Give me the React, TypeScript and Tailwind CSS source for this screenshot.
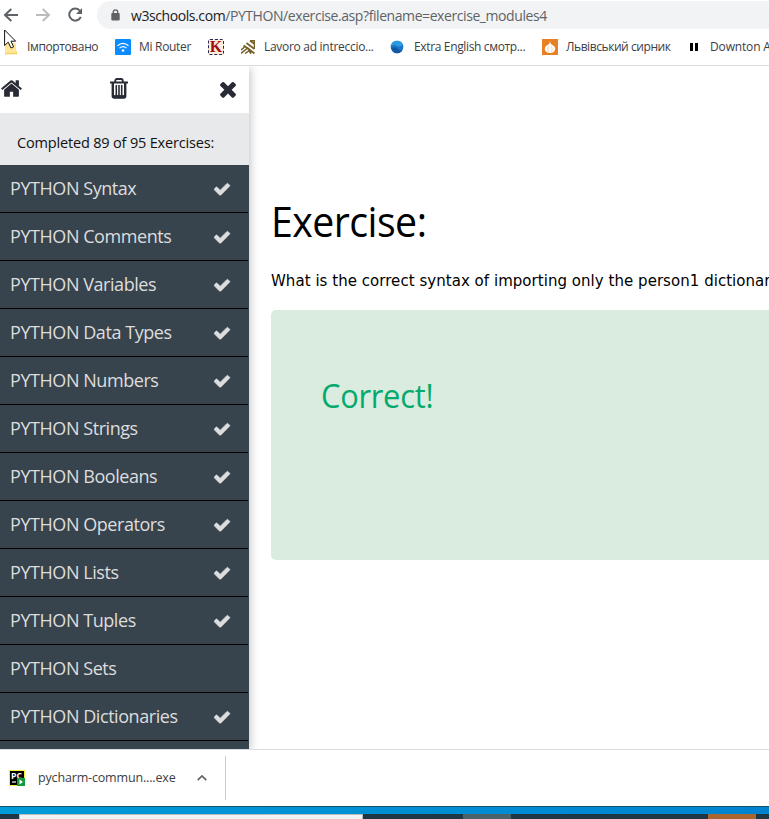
import type { ReactNode } from 'react';

const exercises: { name: string; done: boolean }[] = [
  { name: 'PYTHON Syntax', done: true },
  { name: 'PYTHON Comments', done: true },
  { name: 'PYTHON Variables', done: true },
  { name: 'PYTHON Data Types', done: true },
  { name: 'PYTHON Numbers', done: true },
  { name: 'PYTHON Strings', done: true },
  { name: 'PYTHON Booleans', done: true },
  { name: 'PYTHON Operators', done: true },
  { name: 'PYTHON Lists', done: true },
  { name: 'PYTHON Tuples', done: true },
  { name: 'PYTHON Sets', done: false },
  { name: 'PYTHON Dictionaries', done: true },
];

function CheckIcon() {
  return (
    <svg viewBox="0 0 1792 1792" className="h-[18px] w-[18px] fill-[#dddddd] stroke-[#dddddd]" strokeWidth="60">
      <path d="M1671 566q0 40-28 68l-724 724-136 136q-28 28-68 28t-68-28l-136-136-362-362q-28-28-28-68t28-68l136-136q28-28 68-28t68 28l294 295 656-657q28-28 68-28t68 28l136 136q28 28 28 68z" />
    </svg>
  );
}

function CloseIcon() {
  return (
    <svg viewBox="0 0 1792 1792" className="h-6 w-6 fill-[#282a35]">
      <path d="M1490 1322q0 40-28 68l-136 136q-28 28-68 28t-68-28l-294-294-294 294q-28 28-68 28t-68-28l-136-136q-28-28-28-68t28-68l294-294-294-294q-28-28-28-68t28-68l136-136q28-28 68-28t68 28l294 294 294-294q28-28 68-28t68 28l136 136q28 28 28 68t-28 68l-294 294 294 294q28 28 28 68z" />
    </svg>
  );
}

function HomeIcon() {
  return (
    <svg viewBox="0 0 1792 1792" className="h-[23px] w-[23px] fill-[#282a35]">
      <path d="M1472 992v480q0 26-19 45t-45 19h-384v-384h-256v384h-384q-26 0-45-19t-19-45v-480q0-1 .5-3t.5-3l575-474 575 474q1 2 1 6zm223-69l-62 74q-8 9-21 11h-3q-13 0-21-7l-692-577-692 577q-12 8-24 7-13-2-21-11l-62-74q-8-10-7-23.5t11-21.5l719-599q32-26 76-26t76 26l244 204v-195q0-14 9-23t23-9h192q14 0 23 9t9 23v408l219 182q10 8 11 21.5t-7 23.5z" />
    </svg>
  );
}

function TrashIcon() {
  return (
    <svg viewBox="0 0 18 21" className="mr-0.5 h-[21px] w-[18px]" fill="none" stroke="#282a35">
      <path d="M5.2 4V3Q5.2 1 7 1H11Q12.8 1 12.8 3V4" strokeWidth="1.8" />
      <path d="M0 4.5H18" strokeWidth="2" />
      <path d="M2.8 5V18Q2.8 19.6 4.4 19.6H13.6Q15.2 19.6 15.2 18V5" strokeWidth="2.4" />
      <path d="M3 18.6H15" strokeWidth="3" />
      <path d="M6.3 7V18M9 7V18M11.7 7V18" strokeWidth="1.6" />
    </svg>
  );
}

function Bookmark({ icon, label, className }: { icon: ReactNode; label?: string; className: string }) {
  return (
    <div className={`flex shrink-0 items-center overflow-visible whitespace-nowrap ${className}`}>
      {icon}
      {label && <span>{label}</span>}
    </div>
  );
}

function Toolbar() {
  return (
    <div className="flex h-[30px] items-start">
      <svg viewBox="0 0 97 30" className="h-[30px] w-[97px] shrink-0" fill="none">
        <path d="M18 15H5.5M11.3 9L5 15L11.3 21" stroke="#5f6368" strokeWidth="2" />
        <path d="M36 15H48.5M42.7 9L49 15L42.7 21" stroke="#babcbe" strokeWidth="2" />
        <path d="M80 11A6 6 0 1 0 80.8 16.8" stroke="#5f6368" strokeWidth="2" />
        <path d="M82 8V14H76Z" fill="#5f6368" />
      </svg>
      <div className="mt-px flex h-7 flex-1 items-center rounded-l-full bg-[#f1f3f4]">
        <svg viewBox="0 0 9 12" className="ml-3.5 h-3 w-[9px]" fill="none">
          <rect x="0.3" y="4" width="8.4" height="7.5" rx="1" fill="#5f6368" />
          <path d="M2.3 4.5V3A2.2 2.2 0 0 1 6.7 3V4.5" stroke="#5f6368" strokeWidth="1.3" />
        </svg>
        <span className="ml-[11px] text-[14px] tracking-[-0.42px] whitespace-nowrap text-[#5f6368]">
          <span className="text-[#202124]">w3schools.com</span>/PYTHON/exercise.asp?filename=exercise_modules4
        </span>
      </div>
    </div>
  );
}

function BookmarksBar() {
  return (
    <div className="flex h-[35px] items-center pb-px text-[12px] text-[#3c4043]">
      <Bookmark
        className="w-[115px] gap-2.5 pl-[5px] tracking-[-0.38px]"
        label="Імпортовано"
        icon={
          <svg viewBox="0 0 12 16" className="h-4 w-3" fill="none">
            <path d="M0 2H6L7 4H11V15H0Z" fill="#ffe594" />
            <path d="M0 14.2H11L12 11V15.2H0Z" fill="#f0c94d" />
          </svg>
        }
      />
      <Bookmark
        className="w-[93px] gap-2 tracking-[-0.3px]"
        label="Mi Router"
        icon={
          <svg viewBox="0 0 16 16" className="h-4 w-4" fill="none">
            <rect width="16" height="16" rx="1" fill="#0a8cff" />
            <path d="M2.5 6.7Q8 2 13.5 6.7M4.5 9.1Q8 6.2 11.5 9.1" stroke="#fff" strokeWidth="1.2" />
            <circle cx="8" cy="11.5" r="1.3" fill="#fff" />
          </svg>
        }
      />
      <Bookmark
        className="w-[33px]"
        icon={
          <div className="flex h-4 w-4 items-center justify-center rounded-[2px] border border-dashed border-[#26285c] bg-[#fcecd7] font-['Liberation_Serif',serif] text-[16px] leading-none font-bold text-[#a00c12]">
            K
          </div>
        }
      />
      <Bookmark
        className="w-[149px] gap-[9px] tracking-[-0.29px]"
        label="Lavoro ad intreccio..."
        icon={
          <svg viewBox="0 0 14 14" className="h-3.5 w-3.5" fill="none" stroke="#75602b">
            <path d="M5.5 3L13.5 9M9 .8L13.7 4M2.5 5.5L7 8.5L10 13.7M7 8.5L13.5 13.5" strokeWidth="1.8" />
            <path d="M9 .8H13.5V9M0 10L3.5 7M0 13.3L6 8.5M4 13.5L8.5 10.5" strokeWidth="1.5" />
          </svg>
        }
      />
      <Bookmark
        className="w-[152px] gap-2.5 tracking-[-0.35px]"
        label="Extra English смотр..."
        icon={
          <svg viewBox="0 0 14 14" className="h-3.5 w-3.5" fill="none">
            <circle cx="7" cy="7" r="6.3" fill="#1975c9" />
            <path d="M1 6Q5 4 7 6T13 5Q12 .7 7 .7T1 6Z" fill="#2b9be0" />
            <path d="M1 8Q5 6 8 9T13 9Q11 13.3 7 13.3T1 8Z" fill="#1557a0" />
          </svg>
        }
      />
      <Bookmark
        className="w-[145px] gap-2 tracking-[-0.43px]"
        label="Львівський сирник"
        icon={
          <svg viewBox="0 0 16 16" className="h-4 w-4">
            <rect width="16" height="16" fill="#e88024" />
            <path d="M8 1.5Q8 5 10.5 6Q14 8 13 11Q12 14 8 14T3 11Q2 8 5.5 6Q8 5 8 1.5Z" fill="#fff" />
            <path d="M6.5 7Q5 10 6.5 13M9.5 7Q11 10 9.5 13" stroke="#f3b77f" strokeWidth=".6" fill="none" />
          </svg>
        }
      />
      <Bookmark
        className="gap-3 pl-[3px] tracking-[-0.15px]"
        label="Downton A"
        icon={
          <div className="flex gap-0.5">
            <div className="h-2 w-[3px] bg-black" />
            <div className="h-2 w-[3px] bg-black" />
          </div>
        }
      />
    </div>
  );
}

function Sidebar() {
  return (
    <aside className="h-[683px] w-[249px] shrink-0 bg-[#38444d] shadow-[0_2px_10px_rgba(0,0,0,0.3)]">
      <div className="flex h-[47px] items-center justify-between bg-white pr-[9px] pb-0.5">
        <HomeIcon />
        <TrashIcon />
        <CloseIcon />
      </div>
      <div className="flex h-[52px] items-center bg-[#e7e9eb] pt-2 pl-[17px] text-[14.5px] tracking-[-0.17px] whitespace-nowrap text-[#111111]">
        Completed 89 of 95 Exercises:
      </div>
      <ul className="mr-px">
        {exercises.map((e) => (
          <li
            key={e.name}
            className="flex h-12 items-center justify-between border-b border-black pr-[17px] pl-2.5 text-[18px] tracking-[-0.44px] text-[#dddddd]"
          >
            <span>{e.name}</span>
            {e.done && <CheckIcon />}
          </li>
        ))}
      </ul>
    </aside>
  );
}

export default function App() {
  return (
    <div className="relative flex h-[819px] w-[769px] flex-col overflow-hidden bg-white font-['Open_Sans','Noto_Sans',sans-serif]">
      <header className="h-[66px] shrink-0 border-b border-[#dadce0]">
        <Toolbar />
        <BookmarksBar />
      </header>
      <svg viewBox="0 0 14 21" className="absolute top-[29px] left-1 h-[21px] w-3.5">
        <path d="M.6 1V16.5L4.2 13.2L7 19L9.6 17.8L7 12.2H11.7Z" fill="#fff" stroke="#111" strokeWidth="1" />
      </svg>
      <main className="flex h-[683px] shrink-0 overflow-hidden">
        <Sidebar />
        <section className="min-w-0 flex-1 overflow-hidden pl-[22px]">
          <h1 className="mt-[123px] h-[63px] origin-left scale-x-[0.936] text-[42px] leading-[63px] tracking-[-0.6px] text-black">
            Exercise:
          </h1>
          <p className="mt-[17px] h-6 font-['DejaVu_Sans',sans-serif] text-[15px] leading-6 tracking-[0.04px] whitespace-nowrap text-black">
            What is the correct syntax of importing only the person1 dictionar
          </p>
          <div className="mt-[17px] h-[250px] w-[600px] rounded-[5px] bg-[#d9ecdf] pt-[62px] pl-[50px]">
            <h2 className="origin-left scale-x-[0.965] text-[32px] leading-[48px] tracking-[-0.3px] text-[#04aa6d]">
              Correct!
            </h2>
          </div>
        </section>
      </main>
      <div className="flex h-[57px] shrink-0 items-center border-t border-[#dadce0]">
        <div className="flex h-[44px] w-[226px] items-center border-r border-[#c9cbce] pl-[9px]">
          <svg viewBox="0 0 16 16" className="h-4 w-4 shrink-0" fill="none">
            <rect x=".5" y=".5" width="15" height="15" fill="#000" stroke="#f5f03b" />
            <text x="2" y="8.7" fontSize="8.5" fontWeight="700" fill="#fff" textLength="11" lengthAdjust="spacingAndGlyphs">
              PC
            </text>
            <path d="M3 12H7" stroke="#fff" strokeWidth="1.2" />
            <rect x="8" y="8" width="8" height="8" fill="#149b39" />
            <path d="M10.5 9.5V14.5L14 12Z" fill="#fff" />
          </svg>
          <span className="ml-[13px] pt-px text-[12.5px] tracking-[-0.16px] whitespace-nowrap text-[#3c4043]">
            pycharm-commun....exe
          </span>
          <svg viewBox="0 0 10 6" className="mr-[18px] ml-auto h-1.5 w-2.5" fill="none">
            <path d="M.7 5.2L5 1L9.3 5.2" stroke="#5f6368" strokeWidth="1.7" />
          </svg>
        </div>
      </div>
      <div className="h-2 shrink-0 border-t border-[#12546e] bg-linear-to-r from-[#009bd8] to-[#0083cf]" />
      <div className="flex h-[5px] shrink-0 bg-[#1f3742]">
        <div className="ml-[19px] h-full w-[344px] border-t border-r border-l border-[#b9bdbf] bg-[#f2f2f2]" />
        <div className="ml-[100px] h-full w-12 bg-[#4c626b]" />
        <div className="ml-[197px] h-full w-12 bg-[#a96630]" />
      </div>
    </div>
  );
}
